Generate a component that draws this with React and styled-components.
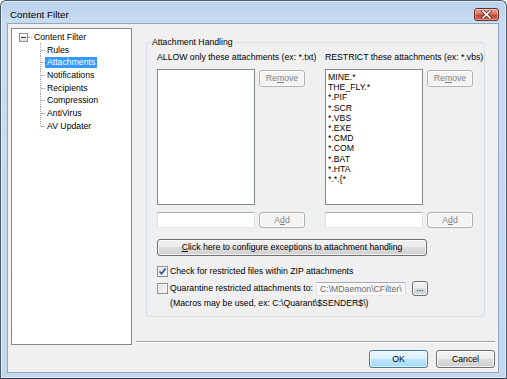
import React from 'react';
import styled, { createGlobalStyle, css } from 'styled-components';

const GlobalStyle = createGlobalStyle`
  html, body {
    margin: 0;
    padding: 0;
    background: #ffffff;
  }
  body {
    font-family: "Liberation Sans", Arial, sans-serif;
    font-size: 8.7px;
    color: #000;
  }
`;

const Window = styled.div`
  width: 507px;
  height: 379px;
  box-sizing: border-box;
  border: 1px solid #4b5a6c;
  border-bottom-color: #2b3442;
  border-radius: 6px 6px 0 0;
  background: linear-gradient(#bcd3ec, #c9dcf1 24px, #c3d7ed);
  display: flex;
  flex-direction: column;
  box-shadow: inset 0 0 0 1px rgba(255, 255, 255, 0.55);
`;

const TitleBar = styled.div`
  height: 22px;
  display: flex;
  align-items: flex-start;
  justify-content: space-between;
  padding: 0 7px 0 9px;
`;

const Title = styled.span`
  font-size: 9.8px;
  line-height: 12px;
  margin-top: 8px;
  color: #000;
`;

const CloseButton = styled.div`
  width: 25px;
  height: 13px;
  margin-top: 7px;
  box-sizing: border-box;
  border: 1px solid #6e2c22;
  border-radius: 3px;
  background: linear-gradient(#e5a99d, #d67a68 45%, #c34531 55%, #cf6b52);
  display: flex;
  align-items: center;
  justify-content: center;
  box-shadow: inset 0 0 0 1px rgba(255, 255, 255, 0.35);
`;

const Client = styled.div`
  flex: 1;
  margin: 0 7px 5px 6px;
  border: 1px solid #8fa5c0;
  background: #f0f0f0;
  display: flex;
  flex-direction: column;
  padding: 4px 3px 0 3px;
`;

const Main = styled.div`
  display: flex;
  height: 317px;
`;

const TreeBox = styled.div`
  width: 121px;
  box-sizing: border-box;
  border: 1px solid #828790;
  background: #fff;
  padding: 2px 0 0 0;
`;

const RootRow = styled.div`
  height: 12.7px;
  display: flex;
  align-items: center;
  padding-left: 7px;
`;

const Expander = styled.span`
  width: 9px;
  height: 9px;
  box-sizing: border-box;
  border: 1px solid #919191;
  background: linear-gradient(#ffffff, #dcdcdc);
  display: flex;
  align-items: center;
  justify-content: center;
  &::before {
    content: '';
    width: 5px;
    height: 1px;
    background: #1f3a6c;
  }
`;

const Connector = styled.span`
  width: 4px;
  border-top: 1px dotted #a0a0a0;
`;

const ChildRow = styled.div`
  position: relative;
  height: 12.7px;
  display: flex;
  align-items: center;
  padding-left: 33px;
  &::before {
    content: '';
    position: absolute;
    left: 28px;
    top: -1px;
    height: ${p => (p.$last ? '7px' : '13.7px')};
    border-left: 1px dotted #a0a0a0;
  }
  &::after {
    content: '';
    position: absolute;
    left: 29px;
    top: 6px;
    width: 4px;
    border-top: 1px dotted #a0a0a0;
  }
`;

const TreeLabel = styled.span`
  line-height: 11px;
  padding: 0 2px;
  white-space: nowrap;
  ${p =>
    p.$selected &&
    css`
      background: #3399ff;
      color: #fff;
    `}
`;

const RightPane = styled.div`
  flex: 1;
  margin-left: 4px;
  display: flex;
  flex-direction: column;
`;

const Group = styled.fieldset`
  margin: 9px 10px 0 10px;
  border: 1px solid #d5dfe5;
  border-radius: 3px;
  padding: 4px 11px 7px 10px;
  min-width: 0;
`;

const Legend = styled.legend`
  margin-left: -6px;
  padding: 0 1px;
  line-height: 11px;
  color: #000;
`;

const Columns = styled.div`
  display: grid;
  grid-template-columns: 148px 148px;
  column-gap: 20px;
`;

const Column = styled.div`
  display: flex;
  flex-direction: column;
`;

const Caption = styled.div`
  line-height: 11px;
  height: 11px;
  margin-bottom: 6px;
  white-space: nowrap;
`;

const ListRow = styled.div`
  display: flex;
  align-items: flex-start;
  gap: 4px;
  margin-top: ${p => p.$gap || 0}px;
`;

const ListBox = styled.div`
  width: 98px;
  height: 136px;
  box-sizing: border-box;
  border: 1px solid #828790;
  background: #fff;
  padding: 2px 0 0 2px;
`;

const ListItem = styled.div`
  line-height: 10.2px;
  height: 10.2px;
  white-space: nowrap;
`;

const TextBox = styled.input`
  width: ${p => p.$w}px;
  height: ${p => p.$h}px;
  box-sizing: border-box;
  border: 1px solid;
  border-color: #abadb3 #dbdfe6 #e3e9ef #e2e3ea;
  background: ${p => (p.disabled ? '#f7f7f7' : '#fff')};
  color: #6d6d6d;
  font: inherit;
  padding: 0 3px;
  margin: 0;
  outline: none;
`;

const Button = styled.button`
  width: ${p => p.$w}px;
  height: ${p => p.$h}px;
  margin-top: ${p => p.$top || 0}px;
  box-sizing: border-box;
  padding: 0;
  font: inherit;
  line-height: 1;
  border-radius: 3px;
  border: 1px solid ${p => (p.disabled ? '#adb2b5' : p.$default ? '#3c7fb1' : '#707070')};
  color: ${p => (p.disabled ? '#838383' : '#000')};
  background: ${p =>
    p.disabled
      ? '#f4f4f4'
      : p.$default
        ? 'linear-gradient(#eaf6fd, #d9f0fc 50%, #bee6fd 50%, #a7d9f5)'
        : 'linear-gradient(#f2f2f2, #ebebeb 50%, #dddddd 50%, #cfcfcf)'};
  box-shadow: inset 0 0 0 1px rgba(255, 255, 255, ${p => (p.disabled ? 0.9 : 0.7)});
  display: flex;
  align-items: center;
  justify-content: center;
  white-space: nowrap;
`;

const CheckRow = styled.div`
  display: flex;
  align-items: center;
  height: ${p => p.$h}px;
  margin-top: ${p => p.$top}px;
`;

const CheckBox = styled.span`
  width: 11px;
  height: 11px;
  box-sizing: border-box;
  border: 1px solid #8e8f8f;
  background: linear-gradient(135deg, #dcdcdc, #fbfbfb);
  box-shadow: inset 0 0 0 1px #f4f4f4;
  margin-right: 2px;
  display: flex;
  align-items: center;
  justify-content: center;
  flex: none;
`;

const CheckLabel = styled.span`
  line-height: 11px;
  white-space: nowrap;
  width: ${p => (p.$w ? `${p.$w}px` : 'auto')};
  flex: none;
`;

const Note = styled.div`
  line-height: 11px;
  margin: 2px 0 0 13px;
  white-space: nowrap;
`;

const Separator = styled.div`
  margin-top: auto;
  margin-bottom: 2px;
  border-top: 1px solid #a0a0a0;
  border-bottom: 1px solid #ffffff;
`;

const Footer = styled.div`
  display: flex;
  justify-content: flex-end;
  gap: 8px;
  margin-top: 5px;
`;

const Check = () => (
  <svg width="9" height="9" viewBox="0 0 9 9">
    <path d="M1.5 4.5 L3.6 6.8 L7.6 1.5" fill="none" stroke="#2b4a9a" strokeWidth="1.6" />
  </svg>
);

const CloseGlyph = () => (
  <svg width="11" height="9" viewBox="0 0 11 9">
    <path d="M2 1.2 L9 7.8 M9 1.2 L2 7.8" stroke="#5a1f16" strokeWidth="3" strokeLinecap="square" />
    <path d="M2 1.2 L9 7.8 M9 1.2 L2 7.8" stroke="#ffffff" strokeWidth="1.6" strokeLinecap="square" />
  </svg>
);

const treeItems = ['Rules', 'Attachments', 'Notifications', 'Recipients', 'Compression', 'AntiVirus', 'AV Updater'];

const restricted = ['MINE.*', 'THE_FLY.*', '*.PIF', '*.SCR', '*.VBS', '*.EXE', '*.CMD', '*.COM', '*.BAT', '*.HTA', '*.*.{*'];

const AttachmentList = ({ caption, items }) => (
  <Column>
    <Caption>{caption}</Caption>
    <ListRow>
      <ListBox>
        {items.map(item => (
          <ListItem key={item}>{item}</ListItem>
        ))}
      </ListBox>
      <Button disabled $w={46} $h={17} $top={1}>
        Re<u>m</u>ove
      </Button>
    </ListRow>
    <ListRow $gap={7}>
      <TextBox $w={98} $h={16} />
      <Button disabled $w={46} $h={16}>
        A<u>d</u>d
      </Button>
    </ListRow>
  </Column>
);

export default function App() {
  return (
    <>
      <GlobalStyle />
      <Window>
        <TitleBar>
          <Title>Content Filter</Title>
          <CloseButton>
            <CloseGlyph />
          </CloseButton>
        </TitleBar>
        <Client>
          <Main>
            <TreeBox>
              <RootRow>
                <Expander />
                <Connector />
                <TreeLabel>Content Filter</TreeLabel>
              </RootRow>
              {treeItems.map((item, i) => (
                <ChildRow key={item} $last={i === treeItems.length - 1}>
                  <TreeLabel $selected={item === 'Attachments'}>{item}</TreeLabel>
                </ChildRow>
              ))}
            </TreeBox>
            <RightPane>
              <Group>
                <Legend>Attachment Handling</Legend>
                <Columns>
                  <AttachmentList caption="ALLOW only these attachments (ex: *.txt)" items={[]} />
                  <AttachmentList caption="RESTRICT these attachments (ex: *.vbs)" items={restricted} />
                </Columns>
                <Button $w={270} $h={17} $top={11}>
                  <span>
                    <u>C</u>lick here to configure exceptions to attachment handling
                  </span>
                </Button>
                <CheckRow $h={13} $top={9}>
                  <CheckBox>
                    <Check />
                  </CheckBox>
                  <CheckLabel>Check for restricted files within ZIP attachments</CheckLabel>
                </CheckRow>
                <CheckRow $h={15} $top={3}>
                  <CheckBox />
                  <CheckLabel $w={146}>Quarantine restricted attachments to:</CheckLabel>
                  <TextBox $w={90} $h={14} disabled defaultValue="C:\MDaemon\CFilter\Quarantine\" />
                  <Button $w={16} $h={15} style={{ marginLeft: 6 }}>
                    ...
                  </Button>
                </CheckRow>
                <Note>(Macros may be used, ex: C:\Quarant\$SENDER$\)</Note>
              </Group>
              <Separator />
            </RightPane>
          </Main>
          <Footer>
            <Button $default $w={59} $h={18}>
              OK
            </Button>
            <Button $w={59} $h={18}>
              Cancel
            </Button>
          </Footer>
        </Client>
      </Window>
    </>
  );
}
